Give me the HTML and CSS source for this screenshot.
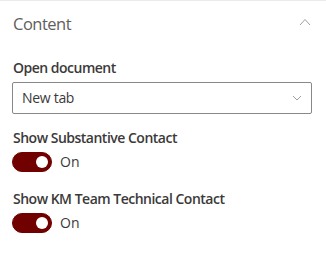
FILE: index.html
```html
<!DOCTYPE html>
<html lang="en">
<head>
    <meta charset="UTF-8"/>
    <title>Property pane</title>
    <link rel="stylesheet" href="styles.css">
</head>
<body>
<div class="pane-group">
    <div class="group-header">
        <span class="group-title">Content</span>
        <svg class="chevron-up" width="12" height="8" viewBox="0 0 12 8">
            <path d="M1 7 L6 1.5 L11 7" fill="none" stroke="#a19f9d" stroke-width="1"/>
        </svg>
    </div>

    <div class="group-content">
        <div class="field">
            <label class="field-label">Open document</label>
            <div class="dropdown">
                <span class="dropdown-text">New tab</span>
                <svg class="chevron-down" width="10" height="6" viewBox="0 0 10 6">
                    <path d="M1 1 L5 5 L9 1" fill="none" stroke="#a19f9d" stroke-width="1"/>
                </svg>
            </div>
        </div>

        <div class="field toggle-field">
            <label class="field-label">Show Substantive Contact</label>
            <div class="toggle-row">
                <span class="toggle is-on"><span class="thumb"></span></span>
                <span class="toggle-text">On</span>
            </div>
        </div>

        <div class="field toggle-field">
            <label class="field-label">Show KM Team Technical Contact</label>
            <div class="toggle-row">
                <span class="toggle is-on"><span class="thumb"></span></span>
                <span class="toggle-text">On</span>
            </div>
        </div>
    </div>
</div>
</body>
</html>
```

FILE: styles.css
```css
body {
    margin: 0;
    background-color: #fff;
    font-family: "Open Sans", "Noto Sans", sans-serif;
    color: #323130;
}

.pane-group {
    border-top: 1px solid #edebe9;
}

.group-header {
    height: 45px;
    display: flex;
    align-items: center;
    justify-content: space-between;
    padding: 0 15px 0 13px;
}

.group-title {
    font-size: 16.5px;
    letter-spacing: -0.5px;
    color: #605e5c;
    line-height: 24px;
}

.chevron-up {
    margin-top: -3px;
}

.group-content {
    padding: 0 14px 0 12px;
}

.field-label {
    display: block;
    font-size: 14px;
    font-weight: 600;
    letter-spacing: -0.5px;
    line-height: 20px;
    padding-left: 1px;
    color: #3b3a39;
}

.field {
    margin-top: 12px;
}

.field-label + .dropdown {
    margin-top: 4px;
}

.dropdown {
    height: 30px;
    border: 1px solid #8a8886;
    border-radius: 2px;
    display: flex;
    align-items: center;
    justify-content: space-between;
    padding: 0 9px 0 9px;
}

.dropdown-text {
    font-size: 14px;
    letter-spacing: -0.3px;
    line-height: 30px;
    color: #3b3a39;
}

.toggle-field {
    margin-top: 14px;
}

.toggle-field + .toggle-field {
    margin-top: 17px;
}

.toggle-row {
    margin-top: 4px;
    display: flex;
    align-items: center;
}

.toggle {
    box-sizing: border-box;
    width: 40px;
    height: 20px;
    border-radius: 10px;
    border: 1px solid #710000;
    background-color: #710000;
    display: flex;
    align-items: center;
    justify-content: flex-end;
    padding: 0 3px;
}

.thumb {
    width: 12px;
    height: 12px;
    border-radius: 50%;
    background: #fff;
}

.toggle-text {
    margin-left: 8px;
    font-size: 14px;
    line-height: 20px;
    color: #3b3a39;
}
```
